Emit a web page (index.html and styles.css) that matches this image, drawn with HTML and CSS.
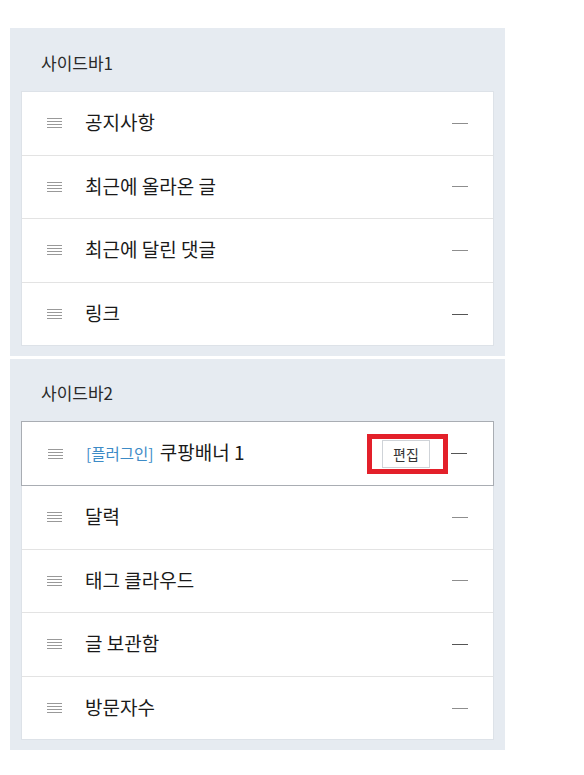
FILE: index.html
```html
<!DOCTYPE html>
<html>
<head>
  <title>사이드바 설정</title>
  <meta name="viewport" content="width=device-width, initial-scale=1.0" />
  <link rel="stylesheet" href="styles.css">
</head>
<body>
  <div class="layout">
    <div class="sidebar">
      <div class="sidebar-title">사이드바1</div>
      <ul class="module-list">
        <li class="module"><span class="handle"></span><span class="name">공지사항</span><span class="remove"></span></li>
        <li class="module"><span class="handle"></span><span class="name">최근에 올라온 글</span><span class="remove"></span></li>
        <li class="module"><span class="handle"></span><span class="name">최근에 달린 댓글</span><span class="remove"></span></li>
        <li class="module"><span class="handle"></span><span class="name">링크</span><span class="remove dark"></span></li>
      </ul>
    </div>

    <div class="sidebar">
      <div class="sidebar-title">사이드바2</div>
      <ul class="module-list">
        <li class="module active">
          <span class="handle"></span>
          <span class="name"><span class="tag">[플러그인]</span> 쿠팡배너 1</span>
          <span class="edit-wrap"><button class="edit-btn">편집</button><span class="highlight"></span></span>
          <span class="remove dark"></span>
        </li>
        <li class="module"><span class="handle"></span><span class="name">달력</span><span class="remove"></span></li>
        <li class="module"><span class="handle"></span><span class="name">태그 클라우드</span><span class="remove"></span></li>
        <li class="module"><span class="handle"></span><span class="name">글 보관함</span><span class="remove dark"></span></li>
        <li class="module"><span class="handle"></span><span class="name">방문자수</span><span class="remove"></span></li>
      </ul>
    </div>
  </div>
</body>
</html>
```

FILE: styles.css
```css
body {
  margin: 0;
  background-color: #fff;
  font-family: "Noto Sans CJK KR", "Noto Sans", sans-serif;
  color: #1a1a1a;
}
.layout {
  width: 495px;
  padding: 28px 0 0 10px;
  display: flex;
  flex-direction: column;
  gap: 3px;
}
.sidebar {
  background-color: #e6ebf1;
  padding: 0 11px 10px;
}
.sidebar-title {
  height: 63px;
  padding: 5px 0 0 20px;
  box-sizing: border-box;
  display: flex;
  align-items: center;
  font-size: 17px;
  line-height: 1;
  color: #2a2a2a;
}
.sidebar + .sidebar .sidebar-title {
  height: 62px;
}
.module-list {
  list-style: none;
  margin: 0;
  padding: 0;
  background-color: #fff;
  border: 1px solid #dde2e8;
}
.module {
  height: 62.6px;
  display: flex;
  align-items: center;
  padding: 0 25px;
  border-bottom: 1px solid #e3e3e3;
}
.module:last-child {
  border-bottom: none;
}
.module.active {
  border: 1px solid #a9adb3;
  margin: -1px -1px 0;
  padding: 0 26px;
}
.handle {
  width: 15px;
  height: 10px;
  flex: none;
  background: repeating-linear-gradient(to bottom, #999 0, #999 1px, transparent 1px, transparent 3px);
}
.name {
  flex: 1;
  margin-left: 23px;
  font-size: 19px;
  line-height: 1;
  padding-bottom: 3px;
}
.tag {
  color: #3d8bc6;
  font-size: 15.5px;
  margin-right: 2px;
}
.remove {
  width: 16px;
  height: 1px;
  flex: none;
  background-color: #8e8e8e;
}
.remove.dark {
  background-color: #555;
}
.edit-wrap {
  position: relative;
  margin-right: 21px;
  display: flex;
}
.edit-btn {
  width: 48px;
  height: 28px;
  padding: 0;
  background-color: #fff;
  border: 1px solid #cfd3d8;
  font-family: inherit;
  font-size: 14px;
  color: #333;
}
.highlight {
  position: absolute;
  left: -15px;
  right: -18px;
  top: -6px;
  bottom: -6px;
  border: 5px solid #e3202a;
}
```
